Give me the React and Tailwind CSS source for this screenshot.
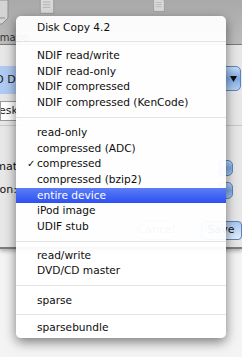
import React from 'react';

const GROUPS = [
  { sep: 'h-[12.5px]', items: ['NDIF read/write', 'NDIF read-only', 'NDIF compressed', 'NDIF compressed (KenCode)'] },
  { sep: 'h-[14px]', items: ['read-only', 'compressed (ADC)', 'compressed', 'compressed (bzip2)', 'entire device', 'iPod image', 'UDIF stub'] },
  { sep: 'h-[13px]', items: ['read/write', 'DVD/CD master'] },
  { sep: 'h-[13.6px]', items: ['sparse'] },
  { sep: 'h-[11.3px]', items: ['sparsebundle'] },
];

const CHECKED = 'compressed';
const SELECTED = 'entire device';

function Sep({ h }) {
  return (
    <div className={`${h} flex items-center`}>
      <div className="h-px w-full bg-[#e3e3e3]" />
    </div>
  );
}

function Item({ label }) {
  const sel = label === SELECTED;
  return (
    <div
      className={
        'h-[15.7px] flex items-center pl-[11px] whitespace-nowrap ' +
        (sel ? 'bg-gradient-to-b from-[#5d7cf6] to-[#2d4ff1] text-white' : 'text-[#0d0d0d]')
      }
    >
      <span className="w-[10px] text-[10px] leading-none">{label === CHECKED ? '✓' : ''}</span>
      <span>{label}</span>
    </div>
  );
}

function DocIcon({ className }) {
  return (
    <svg className={className} viewBox="0 0 24 30" fill="none">
      <path d="M2 1h14l6 6v22H2z" fill="#d9d9d9" stroke="#8c8c8c" />
      <path d="M16 1v6h6" stroke="#8c8c8c" />
      <path d="M6 12h11M6 16h11M6 20h11" stroke="#a0a0a0" />
    </svg>
  );
}

function AquaEnd({ className }) {
  return (
    <div className={`rounded-r-[5px] border border-[#5d82b9] bg-gradient-to-b from-[#b8d3f4] via-[#7eaae4] to-[#a9c8f0] ${className}`} />
  );
}

export default function App() {
  return (
    <div className="relative w-[242px] h-[357px] overflow-hidden bg-[#f4f4f4] font-['DejaVu_Sans',sans-serif] text-[10.6px]">
      {/* window behind the menu */}
      <div className="flex flex-col h-[249px] bg-[#e7e7e7] border-b-2 border-[#7d7d7d] shadow-[0_2px_4px_rgba(0,0,0,0.3)]">
        <div className="relative h-[45px] shrink-0 bg-gradient-to-b from-[#a9a9a9] to-[#bcbcbc] border-b border-[#7a7a7a]">
          <div className="flex items-start gap-[26px]">
            <svg className="w-[14px] h-[26px] -ml-[4px]" viewBox="0 0 14 26">
              <path d="M0 0h12v18l-6 6H0z" fill="#d4d4d4" stroke="#8e8e8e" />
              <path d="M3 18h6" stroke="#8e8e8e" />
            </svg>
            <DocIcon className="w-[22px] h-[20px] -mt-[6px]" />
            <div className="w-[40px]" />
            <DocIcon className="w-[18px] h-[16px] -mt-[4px]" />
          </div>
          <div className="absolute left-[-3px] top-[30px] text-[10px] text-[#333]">image</div>
        </div>
        <div className="flex flex-col pt-[21px]">
          <div className="flex justify-between items-start h-[30px]">
            <div className="w-[17px] h-[28px] bg-[#b0cbf3] flex items-center text-[11px] text-[#222] -ml-[1px] overflow-hidden whitespace-nowrap">
              <span className="-ml-[4px]">O D</span>
            </div>
            <div className="flex items-center justify-center w-[16px] h-[25px] mr-[1px] rounded-r-[5px] border border-[#5d82b9] bg-gradient-to-b from-[#c4dbf6] via-[#7eaae4] to-[#b5d1f3]">
              <svg className="w-[7px] h-[6px]" viewBox="0 0 7 6"><path d="M0 0h7L3.5 6z" fill="#111" /></svg>
            </div>
          </div>
          <div className="flex h-[22px] mt-[5px]">
            <div className="w-[18px] h-[20px] bg-white border border-[#9a9a9a] flex items-center text-[11px] text-[#222] overflow-hidden whitespace-nowrap">
              <span className="-ml-[2px]">esk</span>
            </div>
          </div>
          <div className="h-px bg-[#c8c8c8] mt-[2px]" />
          <div className="flex justify-between items-center h-[17px] mt-[33px]">
            <div className="w-[17px] flex justify-end whitespace-nowrap text-[11px] text-[#111]">Format</div>
            <AquaEnd className="w-[14px] h-[16px] mr-[9px]" />
          </div>
          <div className="flex justify-between items-center h-[17px] mt-[6px]">
            <div className="w-[17px] flex justify-end whitespace-nowrap text-[11px] text-[#111]">Encryption:</div>
            <AquaEnd className="w-[14px] h-[17px] mr-[9px]" />
          </div>
          <div className="flex items-center h-[20px] mt-[21px] pl-[136px] gap-[24px] text-[11px] text-[#111]">
            <div className="w-[62px] h-[19px] rounded-full border border-[#b5b5b5] bg-white flex items-center justify-center text-[#666]">Cancel</div>
            <div className="w-[60px] h-[19px] rounded-[4px] border border-[#5d82b9] bg-gradient-to-b from-[#a8c8f2] to-[#e3eefb] flex items-center pl-[6px]">Save</div>
          </div>
        </div>
      </div>

      {/* pop-up menu */}
      <div className="absolute left-[16px] top-[16px] w-[210px] rounded-[5px] bg-[rgba(255,255,255,0.95)] shadow-[0_4px_12px_rgba(0,0,0,0.5)] pt-[4px] pb-[3px]">
        <Item label="Disk Copy 4.2" />
        {GROUPS.map(g => (
          <div key={g.items[0]}>
            <Sep h={g.sep} />
            {g.items.map(it => <Item key={it} label={it} />)}
          </div>
        ))}
      </div>
    </div>
  );
}
